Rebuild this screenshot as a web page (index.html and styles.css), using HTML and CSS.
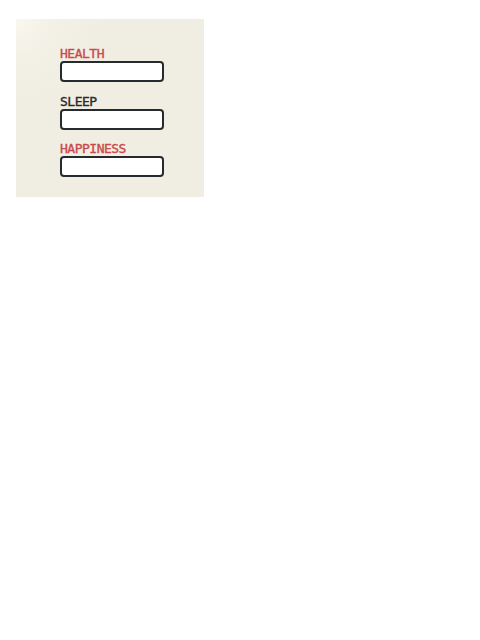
FILE: index.html
```html
<!DOCTYPE html>
<html>
<head>
<meta charset="utf-8">
<link rel="stylesheet" href="styles.css">
</head>
<body>
<div class="page">
  <div class="panel">
    <div class="stat">
      <div class="label red">HEALTH</div>
      <div class="bar"></div>
    </div>
    <div class="stat">
      <div class="label dark">SLEEP</div>
      <div class="bar"></div>
    </div>
    <div class="stat">
      <div class="label red">HAPPINESS</div>
      <div class="bar"></div>
    </div>
  </div>
</div>
</body>
</html>
```
FILE: styles.css
```css
html, body {
  margin: 0;
  padding: 0;
  background: #ffffff;
}
.page {
  padding: 19px 16px;
}
.panel {
  width: 188px;
  height: 178px;
  box-sizing: border-box;
  padding: 27px 0 0 44px;
  background: radial-gradient(circle at 0 0, #f9f7ee 0, #f3f0e6 40px, #f0ede2 90px);
  display: flex;
  flex-direction: column;
  gap: 11.5px;
}
.stat {
  display: flex;
  flex-direction: column;
}
.label {
  font-family: "DejaVu Sans Mono", "Liberation Mono", monospace;
  font-size: 13px;
  letter-spacing: -0.5px;
  line-height: 15px;
  -webkit-text-stroke: 0.35px currentColor;
}
.red { color: #c94a4c; }
.dark { color: #2a2a2a; }
.bar {
  width: 104px;
  height: 21px;
  box-sizing: border-box;
  background: #ffffff;
  border: 2px solid #262a2e;
  border-radius: 4px;
}
```
